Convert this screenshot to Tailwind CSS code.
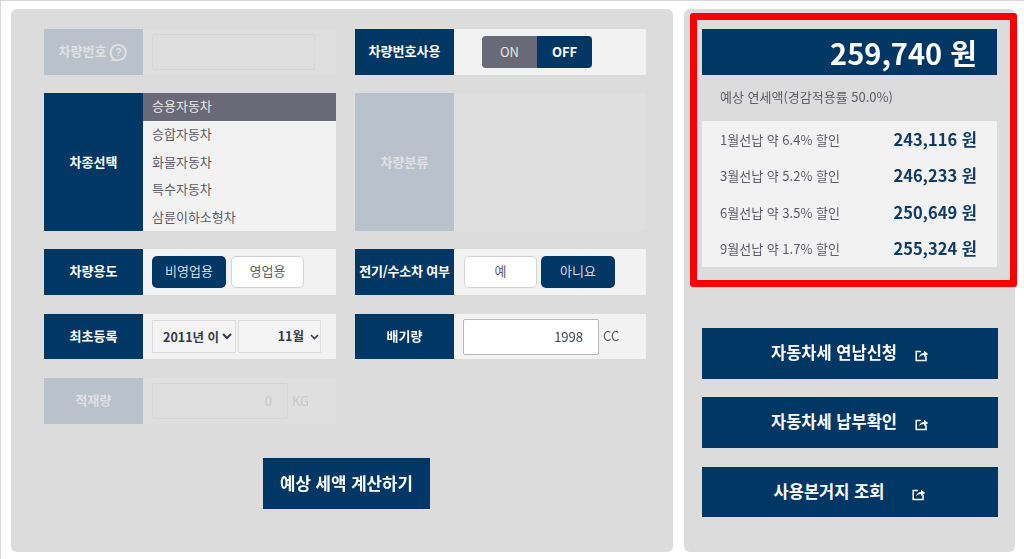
<!DOCTYPE html>
<html lang="ko">
<head>
<meta charset="utf-8">
<script src="https://cdn.jsdelivr.net/npm/@tailwindcss/browser@4"></script>
</head>
<body class="bg-white overflow-hidden font-['Noto_Sans_CJK_KR','Noto_Sans',sans-serif]">
<div class="relative w-[1024px] h-[559px] overflow-hidden pt-[9px] pl-[11px] flex gap-[11px] border-t border-l border-[#d8d8d8] blur-[0.3px]">
  <!-- left panel -->
  <main class="w-[662px] h-[543px] -mt-px -ml-px rounded-md bg-[#dcdcdc] px-[33px] pt-[20px] flex flex-col">
    <div class="grid grid-cols-[292px_291px] gap-x-[19px] grid-rows-[46px_138px_47px_46px_46px] gap-y-[18px]">
      <!-- row 1 -->
      <div class="flex bg-[#dfdfdf]">
        <div class="w-[99px] shrink-0 bg-[#b9c2cb] text-[#dfe1e3] text-[13px] font-bold pb-[2px] flex items-center justify-center gap-[3px]">차량번호
          <svg class="w-[19px] h-[19px] mt-[2px]" viewBox="0 0 20 20" fill="none" stroke="#dfe1e3" stroke-width="2"><path d="M5 16.5A8 8 0 1 1 9 18H3.5Z"/><text x="10" y="14" text-anchor="middle" font-size="11" fill="#dfe1e3" stroke="none" font-family="Liberation Sans">?</text></svg>
        </div>
        <div class="flex items-center pl-[9px]"><div class="w-[163px] h-[36px] rounded-[2px] border border-dotted border-[#cfcfcf] bg-[#dedede]"></div></div>
      </div>
      <div class="flex bg-[#f2f2f2]">
        <div class="w-[99px] shrink-0 bg-[#003764] text-white text-[13px] font-bold pb-[2px] flex items-center justify-center">차량번호사용</div>
        <div class="flex items-center pl-[28px]">
          <div class="flex w-[110px] h-[32px] rounded-[4px] overflow-hidden text-[13px]">
            <div class="w-[55px] bg-[#696977] text-[#e8e8e8] flex items-center justify-center">ON</div>
            <div class="w-[55px] bg-[#003764] text-white font-bold flex items-center justify-center">OFF</div>
          </div>
        </div>
      </div>
      <!-- row 2 -->
      <div class="flex bg-[#f2f2f2]">
        <div class="w-[99px] shrink-0 bg-[#003764] text-white text-[13px] font-bold flex items-center justify-center">차종선택</div>
        <ul class="flex-1 grid grid-rows-5 text-[13px] text-[#5c5c68]">
          <li class="bg-[#696977] text-[#e8e8e8] pl-[9px] pb-[2px] flex items-center">승용자동차</li>
          <li class="pl-[9px] pb-[1px] flex items-center">승합자동차</li>
          <li class="pl-[9px] pb-[1px] flex items-center">화물자동차</li>
          <li class="pl-[9px] pb-[1px] flex items-center">특수자동차</li>
          <li class="pl-[9px] pb-[1px] flex items-center">삼륜이하소형차</li>
        </ul>
      </div>
      <div class="flex bg-[#dfdfdf]">
        <div class="w-[99px] shrink-0 bg-[#b9c2cb] text-[#dfe1e3] text-[13px] font-bold flex items-center justify-center">차량분류</div>
      </div>
      <!-- row 3 -->
      <div class="flex h-[46px] bg-[#f2f2f2]">
        <div class="w-[99px] shrink-0 bg-[#003764] text-white text-[13px] font-bold pb-[2px] flex items-center justify-center">차량용도</div>
        <div class="flex items-center pl-[9px] gap-[5px] text-[13px]">
          <div class="w-[74px] h-[32px] rounded-[5px] bg-[#003764] text-[#d5dde5] pb-[2px] flex items-center justify-center">비영업용</div>
          <div class="w-[73px] h-[32px] rounded-[5px] bg-white border border-[#d2d2d2] text-[#5c5c68] pb-[2px] flex items-center justify-center">영업용</div>
        </div>
      </div>
      <div class="flex h-[46px] bg-[#f2f2f2]">
        <div class="w-[99px] shrink-0 bg-[#003764] text-white text-[13px] font-bold pb-[2px] flex items-center justify-center whitespace-nowrap tracking-[-0.2px]">전기/수소차 여부</div>
        <div class="flex items-center pl-[10px] gap-[4px] text-[13px]">
          <div class="w-[73px] h-[32px] rounded-[5px] bg-white border border-[#d2d2d2] text-[#5c5c68] pb-[2px] flex items-center justify-center">예</div>
          <div class="w-[74px] h-[32px] rounded-[5px] bg-[#003764] text-[#d5dde5] pb-[2px] flex items-center justify-center">아니요</div>
        </div>
      </div>
      <!-- row 4 -->
      <div class="flex h-[45px] bg-[#f2f2f2]">
        <div class="w-[99px] shrink-0 bg-[#003764] text-white text-[13px] font-bold pb-[2px] flex items-center justify-center">최초등록</div>
        <div class="flex items-center pl-[9px] gap-[2px] text-[12.5px] text-[#333c4a] font-bold">
          <select class="w-[84px] h-[33px] bg-[#f4f4f4] border border-[#dcdcdc] pl-[6px] pr-0"><option>2011년 이전</option></select>
          <div class="w-[83px] h-[33px] bg-[#f4f4f4] border border-[#dcdcdc] pr-[1px] flex items-center justify-end gap-[6px]">
            <span>11월</span>
            <svg class="w-[9px] h-[6px]" viewBox="0 0 9 6" fill="none" stroke="#333c4a" stroke-width="1.6"><path d="M1 1L4.5 4.5L8 1"/></svg>
          </div>
        </div>
      </div>
      <div class="flex h-[45px] bg-[#f2f2f2]">
        <div class="w-[99px] shrink-0 bg-[#003764] text-white text-[13px] font-bold pb-[2px] flex items-center justify-center">배기량</div>
        <div class="flex items-center pl-[9px] gap-[4px] text-[13px] text-[#5c5c68]">
          <div class="w-[136px] h-[36px] bg-white border border-[#b5b8bf] rounded-[2px] flex items-center justify-end pr-[15px] text-[#3c4452]">1998</div>
          <span class="pb-[2px]">CC</span>
        </div>
      </div>
      <!-- row 5 -->
      <div class="flex bg-[#dfdfdf]">
        <div class="w-[99px] shrink-0 bg-[#b9c2cb] text-[#dfe1e3] text-[13px] font-bold pb-[2px] flex items-center justify-center">적재량</div>
        <div class="flex items-center pl-[9px] gap-[4px] text-[13px] text-[#c4c6c9]">
          <div class="w-[136px] h-[36px] bg-[#dedede] border border-dotted border-[#cfcfcf] rounded-[2px] flex items-center justify-end pr-[15px]">0</div>
          <span class="pb-[1px]">KG</span>
        </div>
      </div>
    </div>
    <button class="self-start mt-[34px] ml-[219px] w-[167px] h-[51px] bg-[#003764] text-white text-[16.8px] font-bold flex items-center justify-center">예상 세액 계산하기</button>
  </main>
  <!-- right panel -->
  <aside class="w-[331px] h-[543px] -mt-px rounded-md bg-[#dcdcdc] px-[18px] pt-[20px] flex flex-col">
    <div class="h-[46px] w-[295px] bg-[#003764] text-white text-[29px] font-bold flex items-center justify-end pr-[20px] leading-none">259,740 원</div>
    <p class="h-[46px] w-[295px] pl-[18px] pb-[2px] flex items-center text-[13px] text-[#5c5c68]">예상 연세액(경감적용률 50.0%)</p>
    <ul class="w-[295px] h-[146px] bg-[#f2f2f2] pl-[18px] pr-[20px] grid grid-rows-4 text-[13px] text-[#5c5c68]">
      <li class="flex items-center justify-between"><span>1월선납 약 6.4% 할인</span><b class="text-[16.5px] font-bold text-[#0f3a63]">243,116 원</b></li>
      <li class="flex items-center justify-between"><span>3월선납 약 5.2% 할인</span><b class="text-[16.5px] font-bold text-[#0f3a63]">246,233 원</b></li>
      <li class="flex items-center justify-between"><span>6월선납 약 3.5% 할인</span><b class="text-[16.5px] font-bold text-[#0f3a63]">250,649 원</b></li>
      <li class="flex items-center justify-between"><span>9월선납 약 1.7% 할인</span><b class="text-[16.5px] font-bold text-[#0f3a63]">255,324 원</b></li>
    </ul>
    <div class="mt-[61px] w-[296px] flex flex-col gap-[18px]">
      <a class="h-[51px] pb-[2px] bg-[#003764] text-white text-[16.5px] font-bold flex items-center justify-center gap-[18px]">자동차세 연납신청
        <svg class="w-[14px] h-[14px] mt-[5px]" viewBox="0 0 14 14" fill="none" stroke="#fff" stroke-width="1.5"><path d="M6 3.5H1.2V12.5H11V8"/><path d="M4 9.5C4.5 6.5 6.5 5 9 5V2.8L13.2 6L9 9V7C7 7 5.5 7.7 4 9.5Z" fill="#fff" stroke="none"/></svg>
      </a>
      <a class="h-[51px] pb-[2px] bg-[#003764] text-white text-[16.5px] font-bold flex items-center justify-center gap-[18px]">자동차세 납부확인
        <svg class="w-[14px] h-[14px] mt-[5px]" viewBox="0 0 14 14" fill="none" stroke="#fff" stroke-width="1.5"><path d="M6 3.5H1.2V12.5H11V8"/><path d="M4 9.5C4.5 6.5 6.5 5 9 5V2.8L13.2 6L9 9V7C7 7 5.5 7.7 4 9.5Z" fill="#fff" stroke="none"/></svg>
      </a>
      <a class="h-[50px] mt-[1px] pb-[2px] bg-[#003764] text-white text-[16.5px] font-bold flex items-center justify-center gap-[28px]">사용본거지 조회
        <svg class="w-[14px] h-[14px] mt-[5px]" viewBox="0 0 14 14" fill="none" stroke="#fff" stroke-width="1.5"><path d="M6 3.5H1.2V12.5H11V8"/><path d="M4 9.5C4.5 6.5 6.5 5 9 5V2.8L13.2 6L9 9V7C7 7 5.5 7.7 4 9.5Z" fill="#fff" stroke="none"/></svg>
      </a>
    </div>
  </aside>
  <!-- annotation -->
  <div class="absolute left-[689px] top-[12px] w-[327px] h-[274px] border-[7px] border-[#ff0000] rounded-[3px]"></div>
</div>
</body>
</html>
